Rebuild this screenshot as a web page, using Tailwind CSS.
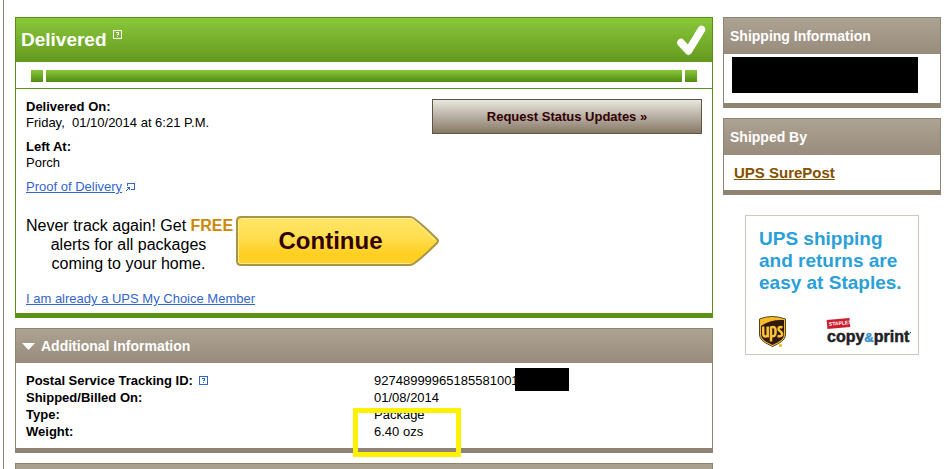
<!DOCTYPE html>
<html lang="en">
<head>
    <meta charset="UTF-8">
    <meta name="viewport" content="width=device-width, initial-scale=1.0">
    <title>Tracking Detail</title>
    <script src="https://cdn.jsdelivr.net/npm/@tailwindcss/browser@4"></script>
    <style>
        body { font-family: 'Liberation Sans', Arial, sans-serif; }
    </style>
</head>
<body class="h-screen overflow-hidden bg-white pl-[3px] text-[13px] leading-4 text-black">
    <div class="flex h-full items-stretch gap-[10px] overflow-hidden border-l border-[#8f8474] pt-[17px] pr-[6px] pl-[11px]">

        <!-- Tracking status -->
        <main class="flex min-w-0 flex-1 flex-col gap-[10px]">
            <section class="shrink-0 border border-b-[5px] border-[#5a9216]">
                <header class="flex h-11 items-center justify-between bg-linear-to-b from-[#8ac83a] to-[#64991f] pr-[6px] pl-[5px]">
                    <div class="flex items-start gap-[6px]">
                        <h1 class="text-[19px] leading-5 font-bold text-white">Delivered</h1>
                        <button type="button" aria-label="Help with status">
                            <svg width="9" height="9" viewBox="0 0 9 9" fill="none" stroke="#fff" shape-rendering="crispEdges"><rect x=".5" y=".5" width="8" height="8"/><path d="M3 2.500h3M5.500 3v1M4 4.500h1.500M4.500 4v1M4 6.500h1"/></svg>
                        </button>
                    </div>
                    <svg width="30" height="31" viewBox="0 0 30 31" fill="none" stroke-linecap="round" stroke-linejoin="round"><path d="M5 18.500L12.500 26.500L25.500 5" stroke="#c7e796" stroke-width="7"/><path d="M5 17.500L12.500 25.500L25.500 4.500" stroke="#fff" stroke-width="7.500"/></svg>
                </header>

                <!-- Progress bar -->
                <div class="flex gap-[3px] border-b border-[#5a9216] px-[15px] pt-2 pb-[6px]">
                    <span class="h-3 w-3 bg-linear-to-b from-[#8ac83a] to-[#528a10]"></span>
                    <span class="h-3 flex-1 bg-linear-to-b from-[#8ac83a] to-[#528a10]"></span>
                    <span class="h-3 w-3 bg-linear-to-b from-[#8ac83a] to-[#528a10]"></span>
                </div>

                <div class="px-[10px] pt-[10px] pb-[6px]">
                    <div class="flex items-start justify-between">
                        <div>
                            <dl>
                                <dt class="font-bold">Delivered On:</dt>
                                <dd class="mb-2">Friday,&nbsp; 01/10/2014 at 6:21 P.M.</dd>
                                <dt class="font-bold">Left At:</dt>
                                <dd class="mb-2">Porch</dd>
                            </dl>
                            <div class="flex items-center gap-1">
                                <a href="#" class="text-[#3366cc] underline">Proof of Delivery</a>
                                <svg width="9" height="9" viewBox="0 0 9 9" fill="none" stroke="#3366cc" shape-rendering="crispEdges"><path d="M1 .5h8M1.500 1v2M8.500 1v6M5 6.500h4M1 4.500h3M3.500 5v2M2 5.500h1M1 6.500h1M0 7.500h1"/></svg>
                            </div>
                        </div>
                        <button type="button" class="h-[35px] w-[270px] border border-[#5e5440] bg-linear-to-b from-[#e8e8df] via-[#b7afa5] to-[#887966] text-[13px] font-bold text-[#330000]">Request Status Updates »</button>
                    </div>

                    <div class="mt-[21px] flex items-start gap-[5px]">
                        <p class="w-[205px] text-center text-base leading-[19px] whitespace-nowrap">Never track again! Get <b class="text-[#cc8800]">FREE</b><br>alerts for all packages<br>coming to your home.</p>
                        <button type="button" class="relative h-[50px] w-[203px] pr-[14px] text-2xl font-bold text-[#330000]">
                            <svg class="absolute inset-0" width="203" height="50" viewBox="0 0 203 50">
                                <defs>
                                    <linearGradient id="gold" x1="0" y1="0" x2="0" y2="1"><stop offset="0" stop-color="#ffe566"/><stop offset=".4" stop-color="#ffdf52"/><stop offset=".8" stop-color="#ffce1f"/><stop offset="1" stop-color="#ffd22f"/></linearGradient>
                                </defs>
                                <path d="M5 1H174Q176 1 178 2.500C186 8 193 15 201 23Q203 25 201 27C193 35 186 42 178 47.500Q176 49 174 49H5Q1 49 1 45V5Q1 1 5 1Z" fill="url(#gold)" stroke="#a89444" stroke-width="2"/>
                                <path d="M5 2.500H174Q176 2.500 178 4L199 24" fill="none" stroke="#fff0a0"/>
                                <path d="M2.500 5V45Q2.500 47.500 5 47.500H174" fill="none" stroke="#ffe98a"/>
                            </svg>
                            <span class="relative">Continue</span>
                        </button>
                    </div>

                    <p class="mt-[18px]"><a href="#" class="text-[#3366cc] underline">I am already a UPS My Choice Member</a></p>
                </div>
            </section>

            <!-- Additional information -->
            <section class="shrink-0 border border-b-[5px] border-[#8f8474]">
                <h2>
                    <button type="button" class="flex h-[34px] w-full items-center gap-[6px] bg-linear-to-b from-[#ada393] to-[#988c7c] px-[6px] text-sm font-bold text-white">
                        <svg width="13" height="7" viewBox="0 0 13 7" fill="#fff"><path d="M0 0h13L6.500 7z"/></svg>
                        Additional Information
                    </button>
                </h2>
                <div class="relative px-[10px] pt-[9px] pb-2">
                    <table class="w-full table-fixed text-left leading-[17px]">
                        <tbody>
                            <tr>
                                <th class="w-[348px] font-bold">
                                    <span class="flex items-center gap-[6px]">Postal Service Tracking ID:
                                        <button type="button" aria-label="Help with tracking ID">
                                            <svg width="9" height="9" viewBox="0 0 9 9" fill="none" stroke="#3366cc" shape-rendering="crispEdges"><rect x=".5" y=".5" width="8" height="8"/><path d="M3 2.500h3M5.500 3v1M4 4.500h1.500M4.500 4v1M4 6.500h1"/></svg>
                                        </button>
                                    </span>
                                </th>
                                <td><span class="relative">92748999965185581001<span class="absolute -top-[5px] left-[141px] h-[23px] w-[54px] bg-black"></span></span></td>
                            </tr>
                            <tr><th class="font-bold">Shipped/Billed On:</th><td>01/08/2014</td></tr>
                            <tr><th class="font-bold">Type:</th><td>Package</td></tr>
                            <tr><th class="font-bold">Weight:</th><td>6.40 ozs</td></tr>
                        </tbody>
                    </table>
                    <!-- Highlight around the weight -->
                    <div class="absolute -bottom-[9px] left-[337px] h-[49px] w-[108px] border-[5px] border-[#fff200]"></div>
                </div>
            </section>

            <!-- Next section, its header runs to the bottom of the window -->
            <section class="min-h-0 flex-1 overflow-hidden border border-b-0 border-[#8f8474] bg-[#aaa090]"></section>
        </main>

        <!-- Sidebar -->
        <aside class="flex w-[218px] shrink-0 flex-col gap-[10px]">
            <section class="border border-b-[5px] border-[#8f8474]">
                <h2 class="flex h-9 items-center bg-linear-to-b from-[#ada393] to-[#988c7c] px-[6px] text-sm font-bold text-white">Shipping Information</h2>
                <div class="px-2 pt-[3px] pb-[10px]">
                    <div class="h-9 w-[186px] bg-black"></div>
                </div>
            </section>

            <section class="border border-b-[5px] border-[#8f8474]">
                <h2 class="flex h-9 items-center bg-linear-to-b from-[#ada393] to-[#988c7c] px-[6px] text-sm font-bold text-white">Shipped By</h2>
                <div class="flex h-[35px] items-center px-[10px]">
                    <a href="#" class="text-[15px] font-bold text-[#855000] underline">UPS SurePost</a>
                </div>
            </section>

            <a href="#" class="mt-[10px] ml-[22px] flex h-[140px] w-[174px] flex-col justify-between border border-[#cdc6ba] pt-3 pr-[6px] pb-[7px] pl-[13px]">
                <p class="text-[19px] leading-[22px] font-bold whitespace-nowrap text-[#2a9fd8]">UPS shipping<br>and returns are<br>easy at Staples.</p>
                <div class="flex items-end justify-between">
                    <svg width="27" height="31" viewBox="0 0 27 31">
                        <path d="M.5 3Q13 -2 26.500 3V18C26.500 25 20 27 13.500 30.500C7 27 .5 25 .5 18Z" fill="#f6bd2b" stroke="#56421c"/>
                        <path d="M2 10Q12 3 25 4V18C25 24 20 25.500 13.500 29C7 25.500 2 24 2 18Z" fill="#33190c"/>
                        <g fill="none" stroke="#f9c43a" stroke-width="2.500">
                            <path d="M4.200 10.500V18Q4.200 20.500 6.500 20.500Q8.700 20.500 8.700 18.500M8.700 10.500V21.500"/>
                            <path d="M12 25.500V11.500Q16.500 10 16.500 14V17Q16.500 21 12 20.200"/>
                            <path d="M23.500 11.500Q19.500 10 19.500 13Q19.500 14.500 21.500 15.500Q23.500 17 23 19Q22 21 18.500 20"/>
                        </g>
                        <rect x="20" y="28" width="3" height="3" rx="1" fill="#f6bd2b"/>
                    </svg>
                    <svg class="text-[#222]" width="86" height="31" viewBox="0 0 86 31">
                        <g transform="rotate(-5 12 8)">
                            <rect x="1" y="3" width="23" height="9" fill="#cc1f2d"/>
                            <text x="3" y="9" font-size="5" font-weight="bold" fill="#fff">STAPLES</text>
                        </g>
                        <text x="1" y="26" font-size="16" font-weight="bold" fill="currentColor" stroke="currentColor" stroke-width=".5">copy<tspan font-size="13" fill="#3a95d0" stroke="#3a95d0">&amp;</tspan>print</text>
                        <rect x="84" y="16" width="1" height="1" fill="currentColor"/>
                    </svg>
                </div>
            </a>
        </aside>
    </div>
</body>
</html>
